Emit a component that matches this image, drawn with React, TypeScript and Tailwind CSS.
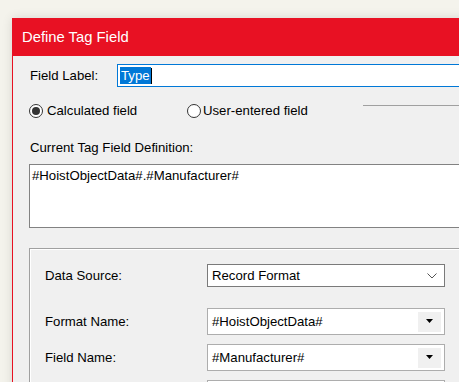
import React from "react";

const font = { fontFamily: '"Liberation Sans", Arial, sans-serif' };

function Radio({ checked }: { checked?: boolean }) {
  return (
    <span className="w-[14px] h-[14px] rounded-full border border-[#333] bg-white flex items-center justify-center shrink-0">
      {checked && <span className="w-[8px] h-[8px] rounded-full bg-[#333]"></span>}
    </span>
  );
}

function Combo({ value }: { value: string }) {
  return (
    <div className="w-[238px] h-[27px] border border-[#adadad] bg-white p-[3px] flex items-center">
      <span className="flex-1 pl-[1px] text-black">{value}</span>
      <span className="w-[23px] h-[20px] bg-[#f0f0f0] flex items-center justify-center">
        <svg width="8" height="5" viewBox="0 0 8 5">
          <path d="M0 0 H7 L3.5 4 Z" fill="#000" />
        </svg>
      </span>
    </div>
  );
}

export default function App() {
  return (
    <div className="w-[459px] h-[382px] overflow-hidden bg-[#f4f3ec] pt-[18px] pl-[12px]" style={font}>
      <div className="w-[520px] h-[400px] border-l border-[#e81123] bg-[#f0f0f0] flex flex-col shadow-[0_0_10px_rgba(0,0,0,0.12)]">
        {/* Title bar */}
        <div className="h-[38px] bg-[#e81123] text-white text-[14.8px] pl-[9px] flex items-center">
          Define Tag Field
        </div>

        <div className="pl-[17px] pt-[8px] flex flex-col text-[13.2px] text-black">
          {/* Field label */}
          <div className="flex items-center h-[23px]">
            <span className="w-[87px]">Field Label:</span>
            <div className="flex-1 h-[23px] border border-[#0078d7] bg-white flex items-center pl-[2px]">
              <span className="bg-[#0078d7] text-white px-[1px] leading-[17px]">Type</span>
              <span className="w-px h-[16px] bg-black"></span>
            </div>
          </div>

          {/* Radios */}
          <div className="flex items-center h-[22px] mt-[13px] -ml-[1px]">
            <Radio checked />
            <span className="ml-[4px] w-[140px]">Calculated field</span>
            <Radio />
            <span className="ml-[2px] w-[160px]">User-entered field</span>
            <span className="flex-1 h-px bg-[#a0a0a0] -mt-[12px]"></span>
          </div>

          {/* Definition */}
          <div className="mt-[17px] leading-[18px]">Current Tag Field Definition:</div>
          <div className="mt-[7px] -ml-[1px] h-[64px] border border-[#828282] bg-white px-[2px] pt-[2px] leading-[18px]">
            #HoistObjectData#.#Manufacturer#
          </div>

          {/* Group box */}
          <div className="mt-[20px] -ml-[1px] border border-[#a0a0a0] shadow-[inset_1px_1px_0_#fff] pl-[15px] pt-[15px] h-[160px]">
            <div className="flex items-center">
              <span className="w-[162px]">Data Source:</span>
              <div className="w-[238px] h-[23px] border border-[#7a7a7a] bg-white flex items-center pl-[4px] pr-[7px]">
                <span className="flex-1">Record Format</span>
                <svg width="10" height="6" viewBox="0 0 10 6">
                  <path d="M0.5 0.5 L5 5 L9.5 0.5" fill="none" stroke="#555" strokeWidth="1" />
                </svg>
              </div>
            </div>
            <div className="flex items-center mt-[21px]">
              <span className="w-[162px]">Format Name:</span>
              <Combo value="#HoistObjectData#" />
            </div>
            <div className="flex items-center mt-[9px]">
              <span className="w-[162px]">Field Name:</span>
              <Combo value="#Manufacturer#" />
            </div>
            <div className="flex items-center mt-[9px]">
              <span className="w-[162px]"></span>
              <div className="w-[238px] h-[27px] border border-[#adadad] bg-white"></div>
            </div>
          </div>
        </div>
      </div>
    </div>
  );
}
